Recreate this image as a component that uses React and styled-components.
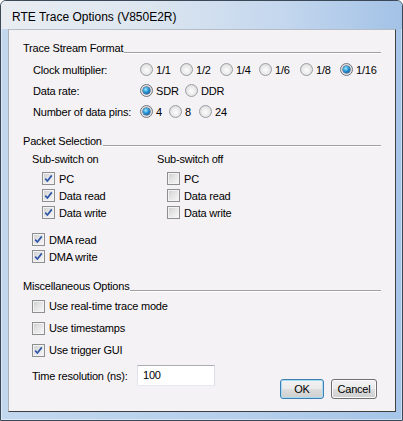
import React from 'react';
import styled, { createGlobalStyle, css } from 'styled-components';

const GlobalStyle = createGlobalStyle`
  html, body {
    margin: 0;
    padding: 0;
    background: #ffffff;
  }
  body {
    font-family: "Liberation Sans", Arial, sans-serif;
    font-size: 11px;
    color: #000;
  }
`;

const Window = styled.div`
  width: 403px;
  height: 421px;
  box-sizing: border-box;
  border: 1px solid #3b4857;
  border-radius: 6px 6px 0 0;
  background: linear-gradient(to right, #c3d8ef 0%, #b6cfec 60%, #a6c5e8 100%);
  display: flex;
  flex-direction: column;
  overflow: hidden;
  box-shadow: inset 0 0 0 1px rgba(255, 255, 255, 0.45);
`;

const TitleBar = styled.div`
  height: 28px;
  flex-shrink: 0;
  box-sizing: border-box;
  padding: 9px 0 0 11px;
  font-size: 12px;
  line-height: 14px;
  color: #000;
  background: linear-gradient(to right, #e9edf2 0%, #dde6f0 35%, #c4d7ee 70%, #a3c2e6 100%);
`;

const Client = styled.div`
  flex: 1;
  margin: 0 6px 8px 7px;
  background: #f5f2f5;
  border-style: solid;
  border-width: 1px;
  border-color: #b4bcc6 #404040 #404040 #a8b0ba;
  display: flex;
  flex-direction: column;
  padding: 0 14px;
  letter-spacing: -0.2px;
`;

const SectionHead = styled.div`
  display: flex;
  align-items: flex-end;
  height: 13px;
  line-height: 13px;
  margin-top: ${p => p.$top}px;
  white-space: nowrap;
`;

const Rule = styled.div`
  flex: 1;
  height: 0;
  margin: 0 0 1px 1px;
  border-top: 1px solid #a0a0a0;
  border-bottom: 1px solid #ffffff;
`;

const FieldGroup = styled.div`
  display: flex;
  flex-direction: column;
  margin-top: 4px;
`;

const FieldRow = styled.div`
  display: flex;
  align-items: center;
  height: 21px;
  padding-left: 10px;
  white-space: nowrap;
`;

const FieldLabel = styled.div`
  width: 107px;
  flex-shrink: 0;
`;

const Option = styled.label`
  display: flex;
  align-items: center;
  gap: 3px;
  flex-shrink: 0;
  ${p => p.$width && css`width: ${p.$width}px;`}
`;

const RadioDot = styled.span`
  position: relative;
  width: 13px;
  height: 13px;
  box-sizing: border-box;
  border-radius: 50%;
  border: 1px solid ${p => (p.$on ? '#6f7780' : '#9a9ea3')};
  background: radial-gradient(circle at 50% 55%, #fdfdfd 0%, #f0f0f0 35%, #d2d2d2 100%);
  flex-shrink: 0;
  ${p => p.$on && css`
    &::after {
      content: '';
      position: absolute;
      left: 2px;
      top: 2px;
      width: 7px;
      height: 7px;
      border-radius: 50%;
      background: radial-gradient(circle at 40% 35%, #a6ecff 0%, #2c9ee0 40%, #0b4c8c 85%);
      box-shadow: 0 0 0 0.5px #173a63;
    }
  `}
`;

const Columns = styled.div`
  display: flex;
  margin-top: 5px;
  padding-left: 9px;
`;

const Column = styled.div`
  display: flex;
  flex-direction: column;
  width: ${p => p.$width || 'auto'};
`;

const SubHead = styled.div`
  height: 13px;
  line-height: 13px;
  white-space: nowrap;
`;

const CheckList = styled.div`
  display: flex;
  flex-direction: column;
  margin-top: ${p => p.$top}px;
  padding-left: ${p => p.$indent}px;
`;

const CheckRow = styled.label`
  display: flex;
  align-items: center;
  gap: 4px;
  height: ${p => p.$height}px;
  white-space: nowrap;
`;

const Box = styled.span`
  width: 13px;
  height: 13px;
  box-sizing: border-box;
  border: 1px solid #8e8f8f;
  background: linear-gradient(135deg, #cbcbcb 0%, #e4e4e4 45%, #f8f8f8 100%);
  box-shadow: inset 0 0 0 1px #f3f3f3;
  display: flex;
  align-items: center;
  justify-content: center;
  flex-shrink: 0;
`;

const Footer = styled.div`
  display: flex;
  justify-content: space-between;
  align-items: flex-start;
  margin-top: 4px;
  padding-left: 9px;
`;

const TimeField = styled.div`
  display: flex;
  align-items: center;
  height: 21px;
`;

const TimeLabel = styled.div`
  width: 105px;
  white-space: nowrap;
`;

const TextInput = styled.div`
  width: 78px;
  height: 21px;
  box-sizing: border-box;
  background: #fff;
  border: 1px solid;
  border-color: #abadb3 #dbdfe6 #e3e9ef #e2e3ea;
  padding-left: 5px;
  line-height: 19px;
`;

const Buttons = styled.div`
  display: flex;
  gap: 7px;
  margin: 14px 4px 0 0;
`;

const Button = styled.button`
  width: ${p => p.$width}px;
  height: 20px;
  box-sizing: border-box;
  padding: 0;
  font-family: inherit;
  font-size: 11px;
  letter-spacing: -0.2px;
  color: #000;
  border-radius: 3px;
  border: 1px solid ${p => (p.$default ? '#3c7fb1' : '#707070')};
  background: linear-gradient(#f2f2f2 0%, #ebebeb 48%, #dddddd 52%, #cfcfcf 100%);
  box-shadow: inset 0 0 0 1px ${p => (p.$default ? '#a8dcf5' : '#fbfbfb')};
`;

const Check = () => (
  <svg width="9" height="9" viewBox="0 0 9 9">
    <path d="M1.2 4.6 L3.4 7 L7.8 1.4" fill="none" stroke="#2f56a8" strokeWidth="1.7" />
  </svg>
);

const Radio = ({ label, on, width }) => (
  <Option $width={width}>
    <RadioDot $on={on} />
    <span>{label}</span>
  </Option>
);

const CheckItem = ({ label, on, height = 17 }) => (
  <CheckRow $height={height}>
    <Box>{on && <Check />}</Box>
    <span>{label}</span>
  </CheckRow>
);

const clockOptions = [
  { label: '1/1', width: 40 },
  { label: '1/2', width: 40 },
  { label: '1/4', width: 39 },
  { label: '1/6', width: 41 },
  { label: '1/8', width: 40 },
  { label: '1/16', on: true },
];

const App = () => (
  <>
    <GlobalStyle />
    <Window>
      <TitleBar>RTE Trace Options (V850E2R)</TitleBar>
      <Client>
        <SectionHead $top={12}>Trace Stream Format<Rule /></SectionHead>
        <FieldGroup>
          <FieldRow>
            <FieldLabel>Clock multiplier:</FieldLabel>
            {clockOptions.map(o => (
              <Radio key={o.label} label={o.label} on={o.on} width={o.width} />
            ))}
          </FieldRow>
          <FieldRow>
            <FieldLabel>Data rate:</FieldLabel>
            <Radio label="SDR" on width={45} />
            <Radio label="DDR" />
          </FieldRow>
          <FieldRow>
            <FieldLabel>Number of data pins:</FieldLabel>
            <Radio label="4" on width={29} />
            <Radio label="8" width={30} />
            <Radio label="24" />
          </FieldRow>
        </FieldGroup>

        <SectionHead $top={13}>Packet Selection<Rule /></SectionHead>
        <Columns>
          <Column $width="125px">
            <SubHead>Sub-switch on</SubHead>
            <CheckList $top={4} $indent={10}>
              <CheckItem label="PC" on />
              <CheckItem label="Data read" on />
              <CheckItem label="Data write" on />
            </CheckList>
          </Column>
          <Column>
            <SubHead>Sub-switch off</SubHead>
            <CheckList $top={4} $indent={10}>
              <CheckItem label="PC" />
              <CheckItem label="Data read" />
              <CheckItem label="Data write" />
            </CheckList>
          </Column>
        </Columns>
        <CheckList $top={10} $indent={9}>
          <CheckItem label="DMA read" on />
          <CheckItem label="DMA write" on />
        </CheckList>

        <SectionHead $top={15}>Miscellaneous Options<Rule /></SectionHead>
        <CheckList $top={2} $indent={9}>
          <CheckItem label="Use real-time trace mode" height={22} />
          <CheckItem label="Use timestamps" height={22} />
          <CheckItem label="Use trigger GUI" on height={22} />
        </CheckList>

        <Footer>
          <TimeField>
            <TimeLabel>Time resolution (ns):</TimeLabel>
            <TextInput>100</TextInput>
          </TimeField>
          <Buttons>
            <Button $default $width={44}>OK</Button>
            <Button $width={46}>Cancel</Button>
          </Buttons>
        </Footer>
      </Client>
    </Window>
  </>
);

export default App;
